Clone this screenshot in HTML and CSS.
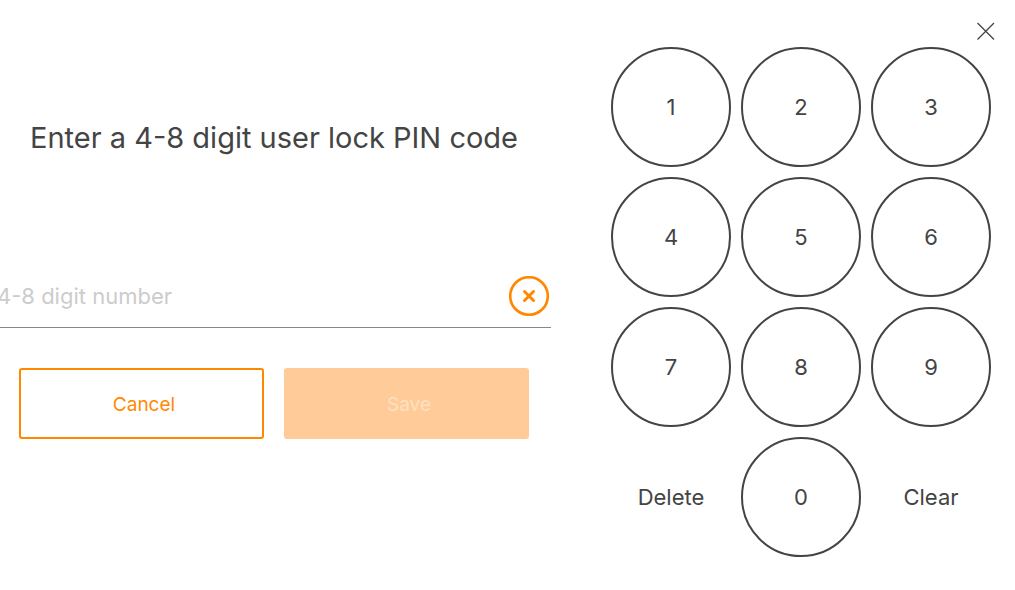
FILE: index.html
```html
<!DOCTYPE html>
<html lang="en">
<head>
    <meta charset="UTF-8">
    <meta name="viewport" content="width=device-width, initial-scale=1.0">
    <title>User lock PIN</title>
    <link rel="stylesheet" href="styles.css">
</head>
<body>
    <header class="top-bar">
        <button class="close-btn" type="button" aria-label="Close">
            <svg width="18" height="18" viewBox="0 0 18 18">
                <path d="M.5 1L17 17.5M17 1L.5 17.5" />
            </svg>
        </button>
    </header>
    <main class="pin-screen">
        <form class="pin-form">
            <h1>Enter a 4-8 digit user lock PIN code</h1>
            <div class="pin-field">
                <input type="text" id="pin" inputmode="numeric" maxlength="8" placeholder="4-8 digit number" aria-label="PIN code">
                <button class="reset-btn" type="reset" aria-label="Reset PIN">
                    <svg width="40" height="40" viewBox="0 0 40 40">
                        <circle cx="20" cy="20" r="18.8" />
                        <path d="M15.5 15.5L24.5 24.5M24.5 15.5L15.5 24.5" />
                    </svg>
                </button>
            </div>
            <div class="actions">
                <button class="btn" type="button">Cancel</button>
                <button class="btn btn-save" type="submit" disabled>Save</button>
            </div>
        </form>
        <div class="keypad">
            <button class="key" type="button">1</button>
            <button class="key" type="button">2</button>
            <button class="key" type="button">3</button>
            <button class="key" type="button">4</button>
            <button class="key" type="button">5</button>
            <button class="key" type="button">6</button>
            <button class="key" type="button">7</button>
            <button class="key" type="button">8</button>
            <button class="key" type="button">9</button>
            <button class="key key-text" type="button">Delete</button>
            <button class="key" type="button">0</button>
            <button class="key key-text" type="button">Clear</button>
        </div>
    </main>
</body>
</html>
```
FILE: styles.css
```css
* {
    box-sizing: border-box;
}
body {
    margin: 0;
    font-family: Inter, "Liberation Sans", sans-serif;
    color: #444;
    background-color: #fff;
    overflow-x: hidden;
}
button {
    font-family: inherit;
    padding: 0;
    border: none;
    background: none;
    cursor: pointer;
}
svg {
    display: block;
    fill: none;
}
.top-bar {
    display: flex;
    justify-content: flex-end;
    height: 47px;
    padding: 22px 20px 0 0;
}
.close-btn {
    width: 18px;
    height: 18px;
}
.close-btn svg {
    stroke: #444;
    stroke-width: 1.3;
}
.pin-screen {
    display: grid;
    grid-template-columns: 1fr 380px;
    gap: 60px;
    padding-right: 24px;
}
.pin-form {
    margin-left: -3px;
    padding-top: 71px;
}
h1 {
    margin: 0 0 108px;
    font-size: 29px;
    font-weight: 400;
    line-height: 40px;
    text-align: center;
    white-space: nowrap;
}
.pin-field {
    display: flex;
    align-items: center;
    height: 62px;
    padding: 0 2px 2px 0;
    border-bottom: 1px solid #888;
}
.pin-field input {
    flex: 1;
    min-width: 0;
    padding: 0;
    border: none;
    outline: none;
    font-family: inherit;
    font-size: 22px;
    color: #444;
    background: none;
}
.pin-field input::placeholder {
    color: #ccc;
}
.reset-btn svg {
    stroke: #ff8800;
    stroke-width: 2.6;
}
.reset-btn path {
    stroke-width: 3;
    stroke-linecap: round;
}
.actions {
    display: flex;
    gap: 20px;
    padding: 40px 22px 0;
}
.btn {
    flex: 1;
    height: 71px;
    padding: 2px 0 0 5px;
    border: 2px solid #ff8800;
    border-radius: 3px;
    font-size: 19px;
    color: #ff8800;
}
.btn-save {
    border-color: #ffcc99;
    background-color: #ffcc99;
    color: #ffe0c0;
    cursor: default;
}
.keypad {
    display: grid;
    grid-template-columns: repeat(3, 120px);
    gap: 10px;
}
.key {
    height: 120px;
    border: 2px solid #444;
    border-radius: 50%;
    font-size: 22px;
    color: #444;
}
.key-text {
    border-color: transparent;
}
```
